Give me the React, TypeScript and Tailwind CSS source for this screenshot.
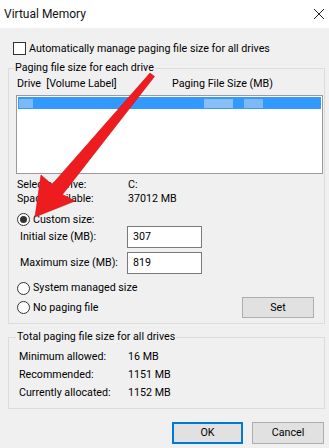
import React from "react";

const font = { fontFamily: 'Roboto, "Noto Sans", sans-serif' };

function Radio({ checked }: { checked?: boolean }) {
  return (
    <span className="w-[13px] h-[13px] rounded-full border border-[#333] bg-white flex items-center justify-center shrink-0">
      {checked && <span className="w-[7px] h-[7px] rounded-full bg-[#333]" />}
    </span>
  );
}

function Arrow() {
  return (
    <svg className="absolute left-0 top-0 pointer-events-none" width="329" height="448" viewBox="0 0 329 448">
      <polygon
        points="35,217 41,175 52,184.5 150,73 154.5,76.5 62.5,194.5 75,201"
        fill="#ee1c1f"
        stroke="#c4161a"
        strokeWidth="0.6"
        strokeLinejoin="round"
      />
    </svg>
  );
}

export default function App() {
  return (
    <div className="relative w-[329px] h-[448px] bg-[#f0f0f0] overflow-hidden text-[10.7px] leading-[14px] text-black" style={font}>
      {/* Title bar */}
      <div className="h-[28px] bg-white flex items-center justify-between pl-[4px] pr-[4px]">
        <span className="text-[12px] text-[#111]">Virtual Memory</span>
        <svg width="12" height="12" viewBox="0 0 12 12">
          <path d="M1 1 L11 11 M11 1 L1 11" stroke="#222" strokeWidth="1" />
        </svg>
      </div>

      {/* Auto manage checkbox */}
      <div className="mt-[14px] ml-[13px] flex items-center h-[13px]">
        <span className="w-[13px] h-[13px] border border-[#333] bg-white shrink-0" />
        <span className="ml-[3px]">Automatically manage paging file size for all drives</span>
      </div>

      {/* Per-drive group */}
      <fieldset className="mt-[6px] ml-[8px] mr-[4px] border border-[#dcdcdc] pl-[7px] pr-[1px] pb-[5px]">
        <legend className="ml-[-2px] px-[1px] leading-[14px]">Paging file size for each drive</legend>
        <div className="mt-[2px] flex h-[14px] pl-[1px]">
          <span className="w-[155px]">Drive&nbsp;&nbsp;[Volume Label]</span>
          <span>Paging File Size (MB)</span>
        </div>
        <div className="mt-[4px] h-[79px] bg-white border border-[#9a9a9a] pt-[1px] px-[1px]">
          <div className="h-[12px] bg-[#3399ff] flex items-center">
            <span className="ml-[1px] w-[14px] h-[9px] bg-[#8fc0f4] opacity-80" />
            <span className="ml-[171px] w-[29px] h-[9px] bg-[#9cc8f4] opacity-80" />
            <span className="ml-[11px] w-[19px] h-[9px] bg-[#8fc0f4] opacity-80" />
          </div>
        </div>
        <div className="mt-[4px] pl-[1px]">
          <div className="flex h-[14px]">
            <span className="w-[111px]">Selected drive:</span>
            <span>C:</span>
          </div>
          <div className="flex h-[14px]">
            <span className="w-[111px]">Space available:</span>
            <span>37012 MB</span>
          </div>
        </div>
        <div className="mt-[7px] flex items-center h-[13px] pl-[1px]">
          <Radio checked />
          <span className="ml-[3px]">Custom size:</span>
        </div>
        <div className="flex items-center h-[22px] pl-[4px]">
          <span className="w-[107px]">Initial size (MB):</span>
          <div className="w-[75px] h-[22px] bg-white border border-[#7a7a7a] flex items-center pl-[5px]">307</div>
        </div>
        <div className="mt-[4px] flex items-center h-[22px] pl-[4px]">
          <span className="w-[107px]">Maximum size (MB):</span>
          <div className="w-[75px] h-[22px] bg-white border border-[#7a7a7a] flex items-center pl-[5px]">819</div>
        </div>
        <div className="mt-[7px] flex items-center h-[14px] pl-[1px]">
          <Radio />
          <span className="ml-[3px]">System managed size</span>
        </div>
        <div className="mt-[2px] flex items-center justify-between h-[21px] pl-[1px] pr-[9px]">
          <div className="flex items-center">
            <Radio />
            <span className="ml-[3px]">No paging file</span>
          </div>
          <div className="w-[72px] h-[21px] bg-[#e1e1e1] border border-[#adadad] flex items-center justify-center">Set</div>
        </div>
      </fieldset>

      {/* Totals group */}
      <fieldset className="mt-[6px] ml-[8px] mr-[4px] border border-[#dcdcdc] pl-[10px] pb-[8px]">
        <legend className="ml-[-3px] px-[1px] leading-[14px]">Total paging file size for all drives</legend>
        <div className="mt-[6px] flex flex-col gap-[4px]">
          {[
            ["Minimum allowed:", "16 MB"],
            ["Recommended:", "1151 MB"],
            ["Currently allocated:", "1152 MB"],
          ].map(([k, v]) => (
            <div key={k} className="flex h-[14px]">
              <span className="w-[109px]">{k}</span>
              <span>{v}</span>
            </div>
          ))}
        </div>
      </fieldset>

      {/* Dialog buttons */}
      <div className="mt-[13px] flex justify-end gap-[9px] pr-[5px]">
        <div className="w-[71px] h-[22px] bg-[#e1e1e1] border-2 border-[#0078d7] flex items-center justify-center">OK</div>
        <div className="w-[72px] h-[22px] bg-[#e1e1e1] border border-[#adadad] flex items-center justify-center">Cancel</div>
      </div>

      <Arrow />
    </div>
  );
}
